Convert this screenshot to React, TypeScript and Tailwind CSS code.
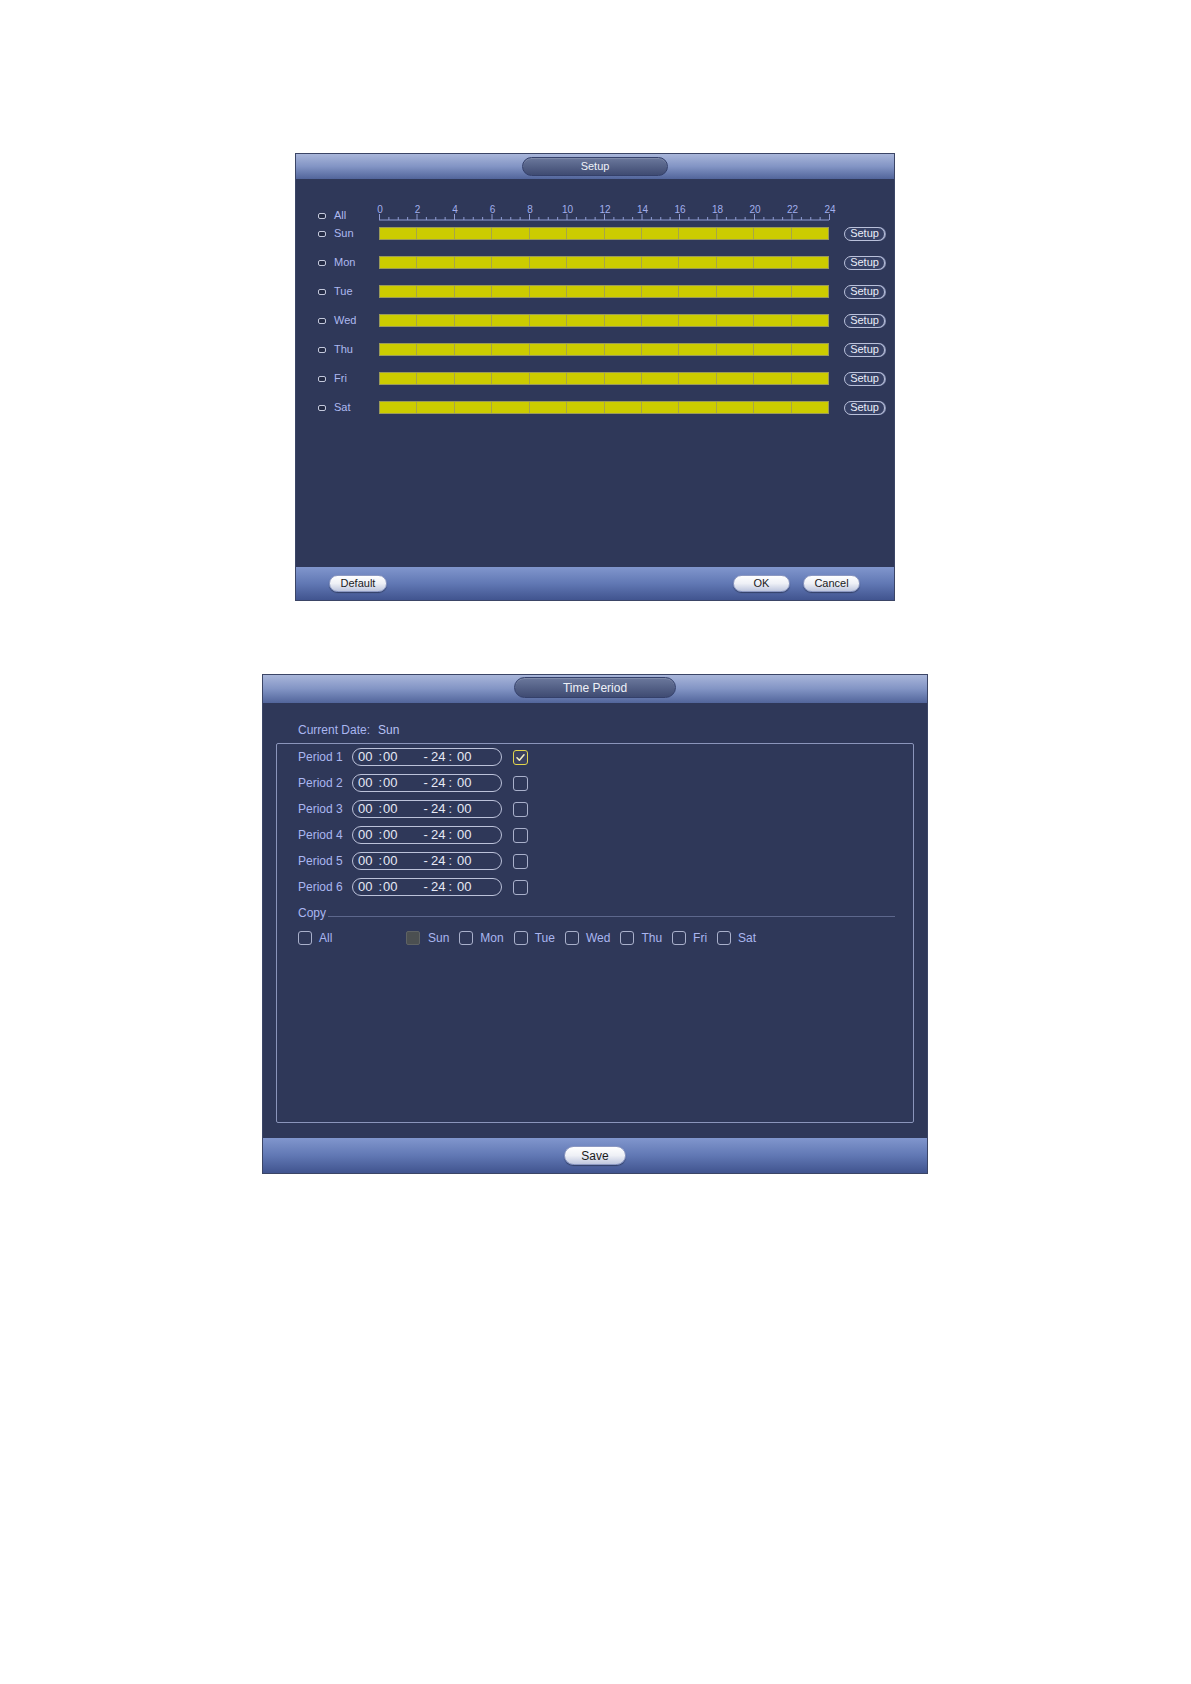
const days = ["Sun", "Mon", "Tue", "Wed", "Thu", "Fri", "Sat"]
const periods = [1, 2, 3, 4, 5, 6]

function DayBox() {
  return <div className="h-[6px] w-[8px] rounded-[2px] border-[1.5px] border-[#c3c8dc] bg-[#242b45]" />
}

function Ruler() {
  const ticks = []
  for (let i = 0; i <= 48; i++) {
    const x = i * 9.375 + 0.5
    const big = i % 4 === 0
    ticks.push(<line key={i} x1={x} x2={x} y1={big ? 14 : 17} y2={20} stroke="#8f9bd2" strokeWidth="1" />)
  }
  const labels = []
  for (let h = 0; h <= 24; h += 2) {
    labels.push(
      <text key={h} x={h * 18.75 + 1} y={13} textAnchor="middle" fontSize="10" fill="#a2afec" fontFamily="Liberation Sans, Arial, sans-serif">
        {h}
      </text>
    )
  }
  return (
    <svg width="450" height="22" className="overflow-visible">
      <line x1="0" x2="450" y1="20" y2="20" stroke="#8f9bd2" strokeWidth="1" />
      {ticks}
      {labels}
    </svg>
  )
}

function Bar() {
  return (
    <div className="flex h-[13px] w-[450px] border border-[#9a9a5a] bg-[#cccc00]">
      {Array.from({ length: 12 }).map((_, i) => (
        <div key={i} className={i < 11 ? "flex-1 border-r border-[#a5a54a]" : "flex-1"} />
      ))}
    </div>
  )
}

function PillButton({ label, w }: { label: string; w: string }) {
  return (
    <div
      className={`${w} flex h-[17px] items-center justify-center rounded-full border border-[#8d99c2] bg-gradient-to-b from-[#ffffff] via-[#eef0f6] to-[#bfc7de] text-[11px] text-[#1b1b1b] shadow-[0_1px_1px_rgba(0,0,0,0.35)]`}
    >
      {label}
    </div>
  )
}

function Check({ checked }: { checked?: boolean }) {
  if (checked) {
    return (
      <div className="flex h-[15px] w-[15px] items-center justify-center rounded-[3px] border border-[#e2d54c] bg-[#3a4060]">
        <svg width="11" height="11" viewBox="0 0 11 11">
          <path d="M2 5.8 L4.4 8.2 L9 2.8" fill="none" stroke="#f0ebc0" strokeWidth="1.6" strokeLinecap="round" strokeLinejoin="round" />
        </svg>
      </div>
    )
  }
  return <div className="h-[15px] w-[15px] rounded-[3px] border border-[#a9b0cb] bg-[#2f3859]" />
}

function SmallCheck({ filled }: { filled?: boolean }) {
  return filled ? (
    <div className="h-[14px] w-[14px] rounded-[2px] border border-[#5e6264] bg-[#4b4f51]" />
  ) : (
    <div className="h-[14px] w-[14px] rounded-[3px] border border-[#a9b0cb] bg-[#2f3859]" />
  )
}

export default function App() {
  return (
    <div className="min-h-[1684px] w-[1191px] bg-white pt-[153px] font-['Liberation_Sans',Arial,sans-serif]">
      {/* Setup panel */}
      <div className="ml-[295px] flex h-[448px] w-[600px] flex-col border border-[#3b4566] bg-[#2f3859]">
        <div className="flex h-[25px] shrink-0 justify-center bg-gradient-to-b from-[#a9b6da] via-[#8294c4] to-[#52659b] pt-[3px]">
          <div className="flex h-[19px] w-[146px] items-center justify-center rounded-full border border-[#34406a] bg-gradient-to-b from-[#6b789c] to-[#3f4b72] text-[11px] text-[#eef1f8] shadow-[inset_0_1px_0_rgba(255,255,255,0.15)]">
            Setup
          </div>
        </div>
        <div className="flex-1 pt-[21px]">
          <div className="flex h-[22px] pl-[22px]">
            <div className="flex h-[13px] items-center self-end">
              <DayBox />
              <span className="ml-[8px] w-[45px] text-[11px] text-[#aeb9f0]">All</span>
            </div>
            <Ruler />
          </div>
          <div className="flex flex-col gap-[6px]">
            {days.map((d) => (
              <div key={d} className="flex h-[23px] items-center pl-[22px]">
                <DayBox />
                <span className="ml-[8px] w-[45px] text-[11px] text-[#aeb9f0]">{d}</span>
                <Bar />
                <div className="ml-[15px] flex h-[14px] w-[41px] items-center justify-center rounded-full border border-[#b9c0da] bg-[#364064] text-[11px] text-[#e9ecf8] shadow-[1px_0_0_#8d96b8]">
                  Setup
                </div>
              </div>
            ))}
          </div>
        </div>
        <div className="flex h-[33px] shrink-0 items-center bg-gradient-to-b from-[#8196cd] via-[#6178b4] to-[#41548f] pl-[33px] pr-[34px]">
          <PillButton label="Default" w="w-[58px]" />
          <div className="flex-1" />
          <PillButton label="OK" w="w-[57px]" />
          <div className="ml-[13px]">
            <PillButton label="Cancel" w="w-[57px]" />
          </div>
        </div>
      </div>

      {/* Time Period panel */}
      <div className="ml-[262px] mt-[73px] flex h-[500px] w-[666px] flex-col border border-[#3b4566] bg-[#2f3859]">
        <div className="flex h-[28px] shrink-0 justify-center bg-gradient-to-b from-[#a9b6da] via-[#8294c4] to-[#52659b] pt-[2px]">
          <div className="flex h-[21px] w-[162px] items-center justify-center rounded-full border border-[#34406a] bg-gradient-to-b from-[#6b789c] to-[#3f4b72] text-[12px] text-[#eef1f8] shadow-[inset_0_1px_0_rgba(255,255,255,0.15)]">
            Time Period
          </div>
        </div>
        <div className="flex flex-1 flex-col px-[13px] pb-[15px]">
          <div className="flex h-[40px] items-center pb-[1px] pl-[22px] pt-[14px] text-[12px] text-[#aab6f0]">
            <span>Current Date:</span>
            <span className="ml-[8px] text-[#b8c2f4]">Sun</span>
          </div>
          <div className="flex-1 rounded-[2px] border border-[#8b95bb] pl-[21px]">
            {periods.map((p) => (
              <div key={p} className="flex h-[26px] items-center">
                <span className="w-[54px] text-[12px] text-[#aab6f0]">Period {p}</span>
                <div className="flex h-[18px] w-[150px] items-center rounded-full border border-[#bcc2da] pl-[5px] text-[13px] text-[#e6e9f5]">
                  <span>00</span>
                  <span className="ml-[6px]">:</span>
                  <span className="ml-[1px]">00</span>
                  <span className="ml-[26px]">-</span>
                  <span className="ml-[3px]">24</span>
                  <span className="ml-[3px]">:</span>
                  <span className="ml-[5px]">00</span>
                </div>
                <div className="ml-[11px]">
                  <Check checked={p === 1} />
                </div>
              </div>
            ))}
            <div className="flex h-[25px] items-center pr-[18px]">
              <span className="text-[12px] text-[#aab6f0]">Copy</span>
              <div className="ml-[2px] mt-[7px] h-px flex-1 bg-[#5d678c]" />
            </div>
            <div className="flex h-[26px] items-center text-[12px] text-[#aab6f0]">
              <div className="flex w-[108px] items-center gap-[7px]">
                <SmallCheck />
                <span>All</span>
              </div>
              <div className="flex items-center gap-[8px]">
                <SmallCheck filled />
                <span>Sun</span>
              </div>
              {days.slice(1).map((d) => (
                <div key={d} className="ml-[10px] flex items-center gap-[7px]">
                  <SmallCheck />
                  <span>{d}</span>
                </div>
              ))}
            </div>
          </div>
        </div>
        <div className="flex h-[35px] shrink-0 items-center justify-center bg-gradient-to-b from-[#8196cd] via-[#6178b4] to-[#41548f]">
          <div className="flex h-[19px] w-[62px] items-center justify-center rounded-full border border-[#8d99c2] bg-gradient-to-b from-[#ffffff] via-[#eef0f6] to-[#bfc7de] text-[12px] text-[#1b1b1b] shadow-[0_1px_1px_rgba(0,0,0,0.35)]">
            Save
          </div>
        </div>
      </div>
    </div>
  )
}
